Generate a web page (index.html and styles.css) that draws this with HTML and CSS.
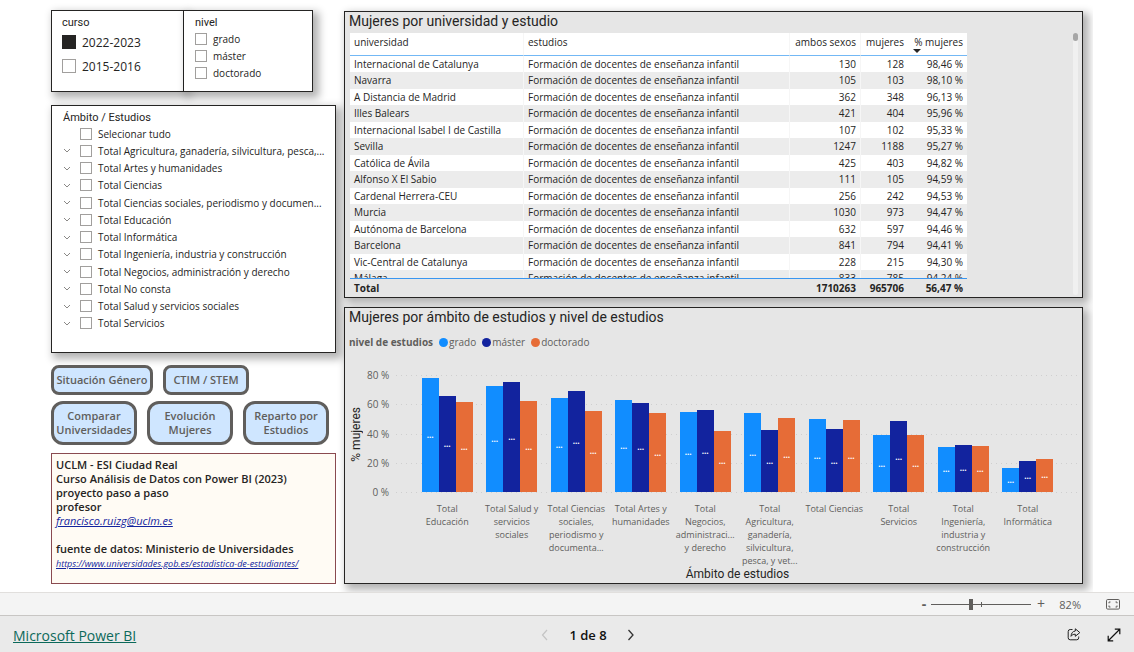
FILE: index.html
```html
<!DOCTYPE html>
<html lang="es">
<head>
<meta charset="utf-8">
<meta name="viewport" content="width=device-width, initial-scale=1">
<title>Mujeres por universidad y estudio</title>
<link rel="stylesheet" href="styles.css">
</head>
<body>
<main class="report">
  <div class="side">
    <div class="slicers">
      <fieldset class="card slicer slicer-large">
        <legend class="slicer-title">curso</legend>
        <label class="option"><input class="box" type="checkbox" checked>2022-2023</label>
        <label class="option"><input class="box" type="checkbox">2015-2016</label>
      </fieldset>
      <fieldset class="card slicer slicer-small">
        <legend class="slicer-title">nivel</legend>
        <label class="option"><input class="box" type="checkbox">grado</label>
        <label class="option"><input class="box" type="checkbox">máster</label>
        <label class="option"><input class="box" type="checkbox">doctorado</label>
      </fieldset>
    </div>

    <section class="card fields">
      <h2 class="slicer-title">Ámbito / Estudios</h2>
      <ul class="tree" id="tree"></ul>
    </section>

    <nav class="nav">
      <div class="nav-row nav-row-short">
        <button class="nav-button wide" type="button">Situación Género</button>
        <button class="nav-button" type="button">CTIM / STEM</button>
      </div>
      <div class="nav-row nav-row-tall">
        <button class="nav-button" type="button">Comparar Universidades</button>
        <button class="nav-button" type="button">Evolución Mujeres</button>
        <button class="nav-button" type="button">Reparto por Estudios</button>
      </div>
    </nav>

    <section class="note">
      <p>UCLM - ESI Ciudad Real</p>
      <p>Curso Análisis de Datos con Power BI (2023)</p>
      <p>proyecto paso a paso</p>
      <p>profesor</p>
      <p><a class="note-link" href="mailto:francisco.ruizg@uclm.es">francisco.ruizg@uclm.es</a></p>
      <p class="note-source">fuente de datos: Ministerio de Universidades</p>
      <p><a class="note-link small" href="https://www.universidades.gob.es/estadistica-de-estudiantes/">https://www.universidades.gob.es/estadistica-de-estudiantes/</a></p>
    </section>
  </div>

  <div class="visuals">
    <section class="card panel table-panel">
      <h2 class="panel-title">Mujeres por universidad y estudio</h2>
      <div class="table-area">
        <div class="table-scroll">
          <table class="data">
            <colgroup><col class="c-uni"><col class="c-est"><col class="c-all"><col class="c-muj"><col class="c-pct"></colgroup>
            <thead>
              <tr><th>universidad</th><th>estudios</th><th class="num">ambos sexos</th><th class="num">mujeres</th><th class="num sorted">% mujeres</th></tr>
            </thead>
            <tbody id="rows"></tbody>
            <tfoot>
              <tr><td>Total</td><td></td><td class="num">1710263</td><td class="num">965706</td><td class="num">56,47 %</td></tr>
            </tfoot>
          </table>
        </div>
        <div class="scrollbar"><span class="scroll-thumb"></span></div>
      </div>
    </section>

    <section class="card panel chart-panel">
      <h2 class="panel-title">Mujeres por ámbito de estudios y nivel de estudios</h2>
      <div class="legend">
        <strong>nivel de estudios</strong>
        <span class="key grado">grado</span>
        <span class="key master">máster</span>
        <span class="key doctorado">doctorado</span>
      </div>
      <div class="chart">
        <div class="y-title"><span>% mujeres</span></div>
        <div class="y-axis"><span>80 %</span><span>60 %</span><span>40 %</span><span>20 %</span><span>0 %</span></div>
        <div class="plot">
          <div class="grid"><i></i><i></i><i></i><i></i><i></i></div>
          <div class="groups" id="groups"></div>
        </div>
        <div class="x-axis" id="labels"></div>
      </div>
      <div class="x-title">Ámbito de estudios</div>
    </section>
  </div>
</main>

<div class="zoombar">
  <button class="zoom-step minus" type="button" aria-label="Alejar">-</button>
  <input class="zoom-range" type="range" min="0" max="100" value="40" aria-label="Zoom">
  <button class="zoom-step" type="button" aria-label="Acercar">+</button>
  <span class="zoom-value">82%</span>
  <button class="icon-button" type="button" aria-label="Ajustar a la página">
    <svg width="14" height="11" viewBox="0 0 14 11" fill="none" stroke="#605e5c"><rect x=".5" y=".5" width="13" height="9.6" rx="1.2"/><path d="M3 4.300V3h1.500M9.500 3H11v1.300M3 6.500V8h1.500M9.500 8H11V6.500"/></svg>
  </button>
</div>

<footer class="footer">
  <a class="brand" href="https://powerbi.microsoft.com">Microsoft Power BI</a>
  <div class="pager">
    <button class="icon-button" type="button" aria-label="Página anterior" disabled>
      <svg width="8" height="12" viewBox="0 0 8 12" fill="none" stroke="#c4c4c4" stroke-width="1.200"><path d="M6 1 1.500 6 6 11"/></svg>
    </button>
    <span>1 de 8</span>
    <button class="icon-button" type="button" aria-label="Página siguiente">
      <svg width="8" height="12" viewBox="0 0 8 12" fill="none" stroke="#333" stroke-width="1.300"><path d="M1.500 1 6 6l-4.500 5"/></svg>
    </button>
  </div>
  <div class="tools">
    <button class="icon-button" type="button" aria-label="Compartir">
      <svg width="14" height="13" viewBox="0 0 14 13" fill="none" stroke="#222" stroke-linejoin="round"><path d="M5.500 1.500H3.200A2 2 0 0 0 1.200 3.500v6.300a2 2 0 0 0 2 2h6.500a2 2 0 0 0 2-2V8.500"/><path d="M8.300.8 12.800 4.600 8.300 8.300V6.200C6.200 6.200 4.900 6.900 4 8.300 4.200 5.200 5.700 3.300 8.300 3z"/></svg>
    </button>
    <button class="icon-button" type="button" aria-label="Pantalla completa">
      <svg width="14" height="14" viewBox="0 0 14 14" fill="none" stroke="#111" stroke-width="1.200"><path d="M1.500 12.500 12.500 1.500M7.800 1.200h5v5M1.200 7.800v5h5"/></svg>
    </button>
  </div>
</footer>
<script src="report.js"></script>
</body>
</html>
```

FILE: styles.css
```css
* { box-sizing: border-box; }

body {
  margin: 0;
  min-height: 100vh;
  display: flex;
  flex-direction: column;
  background: #fff;
  color: #252423;
  font-family: "Open Sans", "Noto Sans", sans-serif;
  font-size: 10px;
}

h2, p, ul, fieldset, legend { margin: 0; padding: 0; }
button, input { font: inherit; margin: 0; }
button { cursor: pointer; }

.report {
  flex: 1;
  display: grid;
  grid-template-columns: 285px 1fr;
  gap: 8px;
  margin: 0 41px;
  padding: 10px 10px 8px;
  overflow: hidden;
}

.card {
  min-width: 0;
  border: 1px solid #252423;
  background: #fff;
  box-shadow: 4px 4px 8px 2px rgba(0, 0, 0, .3);
}

/* Left column */
.side { display: flex; flex-direction: column; }

.slicers { display: flex; width: 262px; height: 82px; }
.slicer { width: 133px; padding: 4px 0 0 10px; }
.slicer + .slicer { width: 129px; border-left: 0; padding-left: 11px; }

.slicer-title {
  float: left;
  width: 100%;
  font: 400 11px/15px Roboto, sans-serif;
}

.option { display: flex; align-items: center; clear: both; }
.slicer-large .option { height: 24px; gap: 6px; font-size: 12px; }
.slicer-small .option { height: 17px; gap: 6px; }

.box {
  appearance: none;
  flex: none;
  width: 12px;
  height: 12px;
  border: 1px solid #a19f9d;
  background: #fff;
}
.slicer-large .box { width: 14px; height: 14px; }
.box:checked { border-color: #252423; background: #252423; }

.fields { height: 248px; margin-top: 13px; padding: 4px 4px 0 11px; }
.fields .slicer-title { float: none; }
.tree {
  display: grid;
  grid-auto-rows: 1fr;
  height: 207px;
  list-style: none;
}
.node { display: flex; align-items: center; gap: 9px; }
.chevron { flex: none; width: 8px; height: 5px; }
.node label { display: flex; align-items: center; gap: 6px; white-space: nowrap; }

.nav { display: flex; flex-direction: column; gap: 6px; margin-top: 12px; }
.nav-row { display: flex; gap: 10px; }
.nav-row-short { height: 30px; }
.nav-row-tall { height: 44px; }
.nav-button {
  width: 86px;
  padding: 0;
  border: 3px solid #605e5c;
  border-radius: 8px;
  background: #cfe6ff;
  color: #605e5c;
  font-size: 11px;
  font-weight: 600;
  line-height: 14px;
}
.nav-button.wide { width: 102px; }
.nav-row-tall .nav-button { border-radius: 12px; }

.note {
  flex: 1;
  margin-top: 8px;
  padding: 4px;
  border: 1px solid #8a4a50;
  background: #fffbf4;
  font-size: 11px;
  font-weight: 600;
  line-height: 14px;
}
.note-source { margin-top: 14px; }
.note-link { color: #12239e; font-weight: 400; font-style: italic; }
.note-link.small { font-size: 9px; }

/* Right column */
.visuals { display: flex; flex-direction: column; gap: 9px; min-width: 0; padding-top: 1px; }
.panel { background: #e6e6e6; }
.panel-title {
  padding-left: 4px;
  font: 400 14px/18px Roboto, sans-serif;
}

.table-area { display: flex; justify-content: space-between; margin: 3px 4px 0 5px; }
.table-scroll { height: 264px; overflow: hidden; }
.data {
  width: 617px;
  table-layout: fixed;
  border-collapse: separate;
  border-spacing: 0;
  line-height: 15px;
  white-space: nowrap;
}
.c-uni { width: 173px; }
.c-est { width: 266px; }
.c-all { width: 71px; }
.c-muj { width: 48px; }
.c-pct { width: 59px; }
.data th, .data td { padding: 0 4px; text-align: left; }
.data .num { text-align: right; }
.data th {
  height: 23px;
  padding-bottom: 3px;
  border-bottom: 1px solid #73b8f5;
  background: #fff;
  font-weight: 400;
}
.data th + th, .data tbody td + td { border-left: 1px solid #f6f6f6; }
.data th + th + th + th + th, .data tbody td + td + td + td + td { border-left: 0; }
.sorted { position: relative; }
.sorted::after {
  content: "";
  position: absolute;
  left: 5px;
  bottom: 2px;
  border: 4px solid transparent;
  border-top-color: #252423;
  border-bottom: 0;
}
.data tbody td { height: 16px; background: #fff; }
.data tbody tr:nth-child(even) td { height: 17px; background: #ececec; }
.data tfoot td {
  position: sticky;
  bottom: 0;
  height: 19px;
  border-top: 1px solid #3a96f0;
  background: #e6e6e6;
  font-weight: 700;
}

.scrollbar { width: 5px; height: 262px; border-radius: 3px; background: #f0f0f0; }
.scroll-thumb { display: block; height: 8px; border-radius: 3px; background: #a6a6a6; }

.chart-panel { flex: 1; display: flex; flex-direction: column; }
.legend {
  display: flex;
  align-items: center;
  gap: 6px;
  height: 16px;
  margin-top: 8px;
  padding-left: 4px;
  color: #605e5c;
}
.key { display: flex; align-items: center; gap: 1px; }
.key::before { content: ""; width: 9px; height: 9px; border-radius: 50%; background: currentColor; }
.key.grado::before { background: #118dff; }
.key.master::before { background: #12239e; }
.key.doctorado::before { background: #e66c37; }

.chart {
  display: grid;
  grid-template-columns: 22px 22px 1fr;
  grid-template-rows: 118px auto;
  margin-top: 25px;
  color: #605e5c;
}
.y-title {
  display: flex;
  align-items: center;
  justify-content: center;
  color: #252423;
}
.y-title span { writing-mode: vertical-rl; transform: rotate(180deg); font: 400 12px Roboto, sans-serif; }
.y-axis {
  display: flex;
  flex-direction: column;
  justify-content: space-between;
  margin: -7px 0;
  line-height: 15px;
  text-align: right;
  white-space: nowrap;
}
.plot, .x-axis { display: grid; }
.plot { margin: 0 3px 0 7px; }
.grid, .groups { grid-area: 1 / 1; }
.grid { display: flex; flex-direction: column; justify-content: space-between; }
.grid i { height: 1px; background: repeating-linear-gradient(90deg, #cfcfcf 0 1px, transparent 1px 5px); }
.groups, .x-axis { display: grid; grid-template-columns: repeat(10, 1fr); }
.groups { margin: 0 19px; height: 117px; }
.group { display: flex; align-items: flex-end; justify-content: center; height: 100%; }
.bar {
  display: flex;
  align-items: center;
  justify-content: center;
  width: 17px;
  color: #fff;
  font-size: 8px;
  font-weight: 700;
  line-height: 8px;
}
.bar.grado { background: #118dff; }
.bar.master { background: #12239e; }
.bar.doctorado { background: #e66c37; }
.x-axis {
  grid-column: 3;
  margin: 9px 22px 0 26px;
  font-size: 9px;
  line-height: 13px;
  text-align: center;
  white-space: nowrap;
}
.x-axis span { display: flex; justify-content: center; }
.x-title { margin-left: 48px; text-align: center; font: 400 12px/14px Roboto, sans-serif; }

/* Bottom bars */
.zoombar {
  display: flex;
  align-items: center;
  justify-content: flex-end;
  height: 24px;
  padding-right: 14px;
  border-top: 1px solid #e1dfdd;
  border-bottom: 1px solid #c8c6c4;
  background: #f4f4f4;
  color: #605e5c;
}
.zoom-step {
  width: 20px;
  padding: 0;
  border: 0;
  background: none;
  color: #605e5c;
  font-size: 14px;
  line-height: 16px;
}
.zoom-step.minus { width: 14px; font-weight: 700; }
.zoom-range {
  appearance: none;
  width: 100px;
  height: 11px;
  background:
    linear-gradient(#605e5c, #605e5c) 50px 50% / 1px 5px no-repeat,
    linear-gradient(#605e5c, #605e5c) 0 50% / 100% 1px no-repeat;
}
.zoom-range::-webkit-slider-thumb { appearance: none; width: 4px; height: 11px; background: #605e5c; }
.zoom-value { width: 30px; margin-right: 25px; text-align: right; font-size: 11px; }

.icon-button { display: flex; padding: 0; border: 0; background: none; }

.footer {
  display: grid;
  grid-template-columns: 1fr auto 1fr;
  align-items: center;
  height: 36px;
  padding: 2px 13px 0;
  background: #eaeaea;
}
.brand { color: #0c695a; font-size: 14px; }
.pager { display: flex; align-items: center; gap: 20px; padding-left: 42px; color: #111; font-size: 13px; font-weight: 600; }
.tools { display: flex; justify-content: flex-end; gap: 26px; }
```

FILE: report.js
```js
const fields = [
  "Selecionar tudo",
  "Total Agricultura, ganadería, silvicultura, pesca,...",
  "Total Artes y humanidades",
  "Total Ciencias",
  "Total Ciencias sociales, periodismo y documen...",
  "Total Educación",
  "Total Informática",
  "Total Ingeniería, industria y construcción",
  "Total Negocios, administración y derecho",
  "Total No consta",
  "Total Salud y servicios sociales",
  "Total Servicios"
];

document.getElementById("tree").innerHTML = fields.map((name, i) => `
  <li class="node">
    <svg class="chevron" viewBox="0 0 8 5" fill="none" stroke="#8a8886">${i ? '<path d="M1 1l3 3 3-3"/>' : ""}</svg>
    <label><input class="box" type="checkbox">${name}</label>
  </li>`).join("");

const study = "Formación de docentes de enseñanza infantil";
const rows = [
  ["Internacional de Catalunya", 130, 128, "98,46 %"],
  ["Navarra", 105, 103, "98,10 %"],
  ["A Distancia de Madrid", 362, 348, "96,13 %"],
  ["Illes Balears", 421, 404, "95,96 %"],
  ["Internacional Isabel I de Castilla", 107, 102, "95,33 %"],
  ["Sevilla", 1247, 1188, "95,27 %"],
  ["Católica de Ávila", 425, 403, "94,82 %"],
  ["Alfonso X El Sabio", 111, 105, "94,59 %"],
  ["Cardenal Herrera-CEU", 256, 242, "94,53 %"],
  ["Murcia", 1030, 973, "94,47 %"],
  ["Autónoma de Barcelona", 632, 597, "94,46 %"],
  ["Barcelona", 841, 794, "94,41 %"],
  ["Vic-Central de Catalunya", 228, 215, "94,30 %"],
  ["Málaga", 833, 785, "94,24 %"]
];

document.getElementById("rows").innerHTML = rows.map(([name, all, women, pct]) => `
  <tr><td>${name}</td><td>${study}</td><td class="num">${all}</td><td class="num">${women}</td><td class="num">${pct}</td></tr>`).join("");

const axisMax = 80;
const levels = ["grado", "master", "doctorado"];
const groups = [
  [["Total", "Educación"], [78, 65.8, 61.4]],
  [["Total Salud y", "servicios", "sociales"], [72.7, 75.4, 62]],
  [["Total Ciencias", "sociales,", "periodismo y", "documenta..."], [64.3, 69.3, 55.5]],
  [["Total Artes y", "humanidades"], [62.9, 61, 54]],
  [["Total", "Negocios,", "administraci...", "y derecho"], [54.9, 56, 41.8]],
  [["Total", "Agricultura,", "ganadería,", "silvicultura,", "pesca, y vet..."], [54, 42.3, 50.5]],
  [["Total Ciencias"], [49.9, 43, 49.5]],
  [["Total", "Servicios"], [38.9, 48.5, 38.9]],
  [["Total", "Ingeniería,", "industria y", "construcción"], [30.9, 32.2, 31.4]],
  [["Total", "Informática"], [16.4, 21.3, 22.8]]
];

document.getElementById("groups").innerHTML = groups.map(([, values]) =>
  `<div class="group">${values.map((v, i) =>
    `<div class="bar ${levels[i]}" style="height:${v / axisMax * 100}%">…</div>`).join("")}</div>`).join("");

document.getElementById("labels").innerHTML = groups.map(([lines]) =>
  `<div>${lines.map(line => `<span>${line}</span>`).join("")}</div>`).join("");
```
